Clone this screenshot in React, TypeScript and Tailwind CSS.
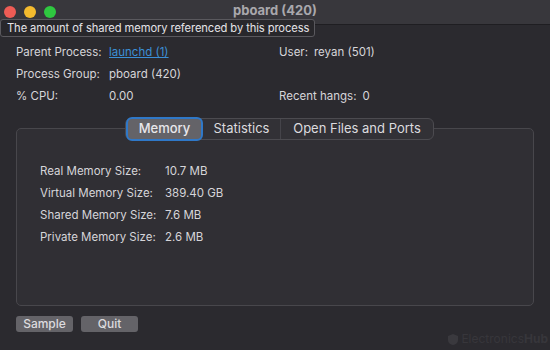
import React from 'react';

const font = { fontFamily: '"Inter", "Liberation Sans", sans-serif' };

const Row = ({ label, value, link }: { label: string; value: string; link?: boolean }) => (
  <div className="flex h-[22px] items-center">
    <span className="w-[93px] shrink-0">{label}</span>
    <span className={link ? 'text-[#3b8fd6] underline' : ''}>{value}</span>
  </div>
);

export default function App() {
  return (
    <div className="relative flex h-[350px] w-[550px] flex-col overflow-hidden bg-[#2b2a2f] text-[11.5px] text-[#d6d5d9]" style={font}>
      {/* title bar */}
      <div className="grid h-[25px] shrink-0 grid-cols-[1fr_auto_1fr] items-center border-b border-[#1f1e22] bg-[#38373c] px-[4px]">
        <div className="flex gap-[8px]">
          <span className="h-[12px] w-[12px] rounded-full bg-[#ee5c55]" />
          <span className="h-[12px] w-[12px] rounded-full bg-[#f4bb2e]" />
          <span className="h-[12px] w-[12px] rounded-full bg-[#2fc840]" />
        </div>
        <div className="pb-[2px] text-center text-[13px] font-bold text-[#a9a8ac]">pboard (420)</div>
        <div />
      </div>

      {/* tooltip */}
      <div className="absolute left-0 top-[19px] z-10 flex h-[18px] w-[315px] items-center whitespace-nowrap rounded-[3px] border border-[#5a595e] bg-[#28272b] px-[6px] text-[11.2px] tracking-[-0.1px] text-[#e4e3e7]">
        The amount of shared memory referenced by this process
      </div>

      {/* info */}
      <div className="grid grid-cols-[263px_1fr] px-[16px] pt-[17px]">
        <div className="flex flex-col">
          <Row label="Parent Process:" value="launchd (1)" link />
          <Row label="Process Group:" value="pboard (420)" />
          <Row label="% CPU:" value="0.00" />
        </div>
        <div className="flex flex-col">
          <div className="flex h-[22px] items-center gap-[6px]"><span>User:</span><span>reyan (501)</span></div>
          <div className="h-[22px]" />
          <div className="flex h-[22px] items-center gap-[6px]"><span>Recent hangs:</span><span>0</span></div>
        </div>
      </div>

      {/* group box */}
      <div className="relative mx-[16px] mt-[20px] h-[178px] rounded-[5px] border border-[#48474c] bg-[#302f34]">
        <div className="absolute left-[108px] top-[-11px] flex h-[22px] w-[309px] items-center rounded-[6px] border border-[#4c4b50] bg-[#323136] text-[13px] text-[#dcdbdf]">
          <div className="flex h-[24px] w-[77px] items-center justify-center rounded-[6px] border-[2.5px] border-[#2f78c8] bg-[#646368] font-medium text-[#e8e7eb]">Memory</div>
          <div className="flex w-[78px] justify-center border-r border-[#45444a]">Statistics</div>
          <div className="flex flex-1 justify-center">Open Files and Ports</div>
        </div>
        <div className="flex flex-col px-[23px] pt-[32px]">
          {[
            ['Real Memory Size:', '10.7 MB'],
            ['Virtual Memory Size:', '389.40 GB'],
            ['Shared Memory Size:', '7.6 MB'],
            ['Private Memory Size:', '2.6 MB'],
          ].map(([l, v]) => (
            <div key={l} className="flex h-[22px] items-center">
              <span className="w-[125px] shrink-0">{l}</span>
              <span>{v}</span>
            </div>
          ))}
        </div>
      </div>

      {/* buttons */}
      <div className="flex gap-[8px] px-[16px] pt-[10px] text-[12px] font-medium text-[#dcdbdf]">
        <button className="flex h-[16px] w-[57px] items-center justify-center rounded-[3px] bg-[#646368]">Sample</button>
        <button className="flex h-[16px] w-[57px] items-center justify-center rounded-[3px] bg-[#646368]">Quit</button>
      </div>

      <div className="absolute bottom-[2px] right-[2px] flex items-center gap-[3px] text-[12px] text-[#37363b]">
        <svg width="10" height="11" viewBox="0 0 10 11"><path d="M5 0L10 2v4c0 3-2.5 4.5-5 5C2.5 10.5 0 9 0 6V2z" fill="#3a393e" /></svg>
        <span>Electronics<b>Hub</b></span>
      </div>
    </div>
  );
}
